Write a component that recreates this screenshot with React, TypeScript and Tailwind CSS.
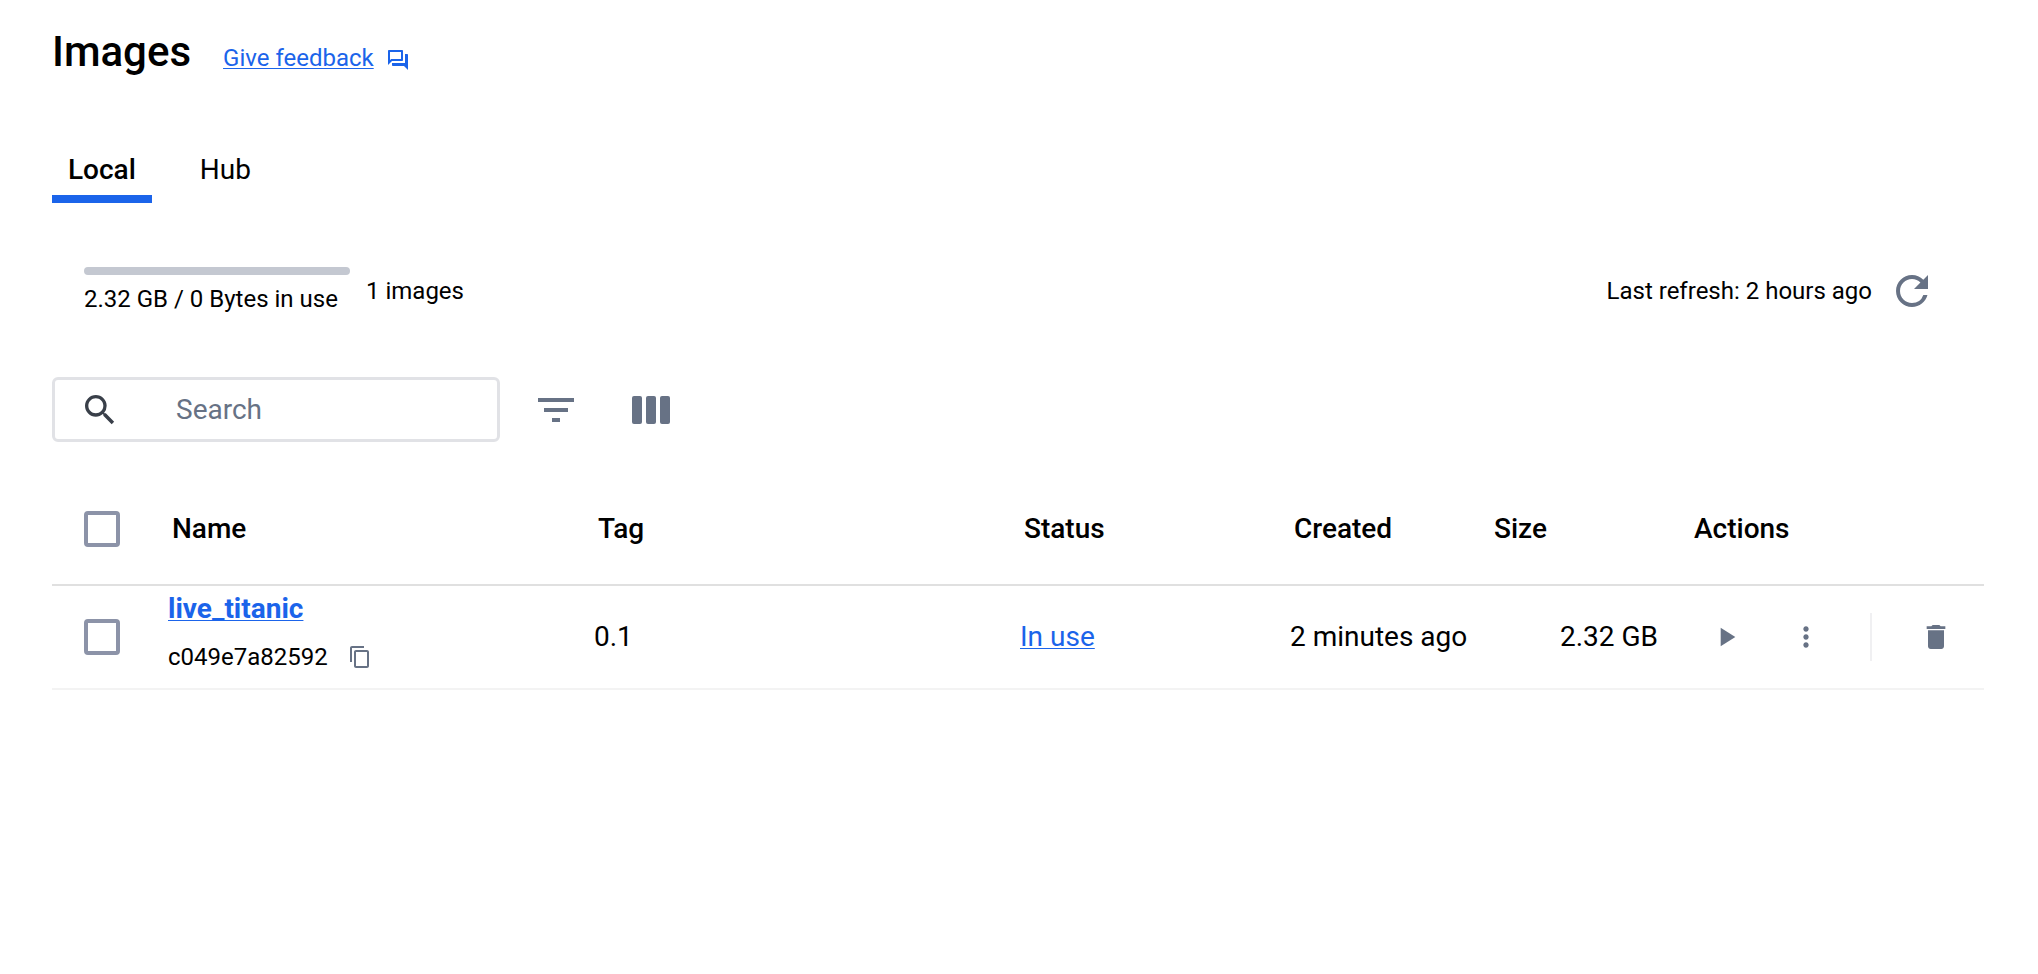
import { useState } from "react";
import {
  MdContentCopy,
  MdDelete,
  MdFilterList,
  MdMoreVert,
  MdOutlineQuestionAnswer,
  MdPlayArrow,
  MdRefresh,
  MdSearch,
} from "react-icons/md";

const images = [
  {
    name: "live_titanic",
    id: "c049e7a82592",
    tag: "0.1",
    status: "In use",
    created: "2 minutes ago",
    size: "2.32 GB",
  },
];

const columns = ["Name", "Tag", "Status", "Created", "Size", "Actions"];

function ColumnsIcon() {
  return (
    <svg width="38" height="28" viewBox="0 0 38 28" fill="currentColor" aria-hidden="true">
      <rect x="0" y="0" width="10" height="28" rx="2" />
      <rect x="14" y="0" width="10" height="28" rx="2" />
      <rect x="28" y="0" width="10" height="28" rx="2" />
    </svg>
  );
}

function Checkbox({ label }: { label: string }) {
  return (
    <input
      type="checkbox"
      aria-label={label}
      className="block size-9 appearance-none rounded border-4 border-[#8c93a8] bg-white checked:bg-[#1b64ea]"
    />
  );
}

export default function App() {
  const [tab, setTab] = useState("Local");

  return (
    <main className="min-h-screen bg-white pt-6 pr-[54px] pl-[52px] font-[Roboto,sans-serif] text-black">
      <header className="flex items-baseline gap-8">
        <h1 className="text-[42px] leading-14 font-medium">Images</h1>
        <a href="#feedback" className="flex items-center gap-3 text-2xl text-[#1b64ea]">
          <span className="underline decoration-1 underline-offset-2">Give feedback</span>
          <MdOutlineQuestionAnswer className="mt-1 size-6" />
        </a>
      </header>

      <nav role="tablist" className="mt-16 flex gap-8">
        {["Local", "Hub"].map((name) => (
          <button
            key={name}
            type="button"
            role="tab"
            aria-selected={tab === name}
            onClick={() => setTab(name)}
            className={
              tab === name
                ? "h-[59px] border-b-8 border-[#1b64ea] px-4 text-[28px] leading-[52px] font-medium"
                : "h-[59px] border-b-8 border-transparent px-4 text-[28px] leading-[52px]"
            }
          >
            {name}
          </button>
        ))}
      </nav>

      <section className="mt-16 flex items-center gap-4 pr-12 pl-8 text-2xl leading-8">
        <div className="w-[266px]">
          <div className="h-2 rounded-full bg-[#c4c8d1]" />
          <p className="mt-2 whitespace-nowrap">2.32 GB / 0 Bytes in use</p>
        </div>
        <p>1 images</p>
        <p className="ml-auto">Last refresh: 2 hours ago</p>
        <button type="button" aria-label="Refresh" className="text-[#677285]">
          <MdRefresh className="size-12" />
        </button>
      </section>

      <section className="mt-[62px] flex items-center gap-8 text-[#677285]">
        <label className="flex h-[65px] w-[448px] items-center rounded-md border-3 border-[#e1e2e6] pl-[25px]">
          <MdSearch className="size-10 shrink-0 text-[#393f49]" />
          <input
            type="text"
            aria-label="Search"
            placeholder="Search"
            className="ml-14 w-full min-w-0 text-[28px] outline-none placeholder:text-[#677285]"
          />
        </label>
        <button type="button" aria-label="Filter">
          <MdFilterList className="size-12" />
        </button>
        <button type="button" aria-label="Columns" className="ml-5">
          <ColumnsIcon />
        </button>
      </section>

      <table className="mt-8 w-full table-fixed text-left text-[28px]">
        <colgroup>
          <col className="w-[100px]" />
          <col />
          <col />
          <col className="w-[270px]" />
          <col className="w-[200px]" />
          <col className="w-[200px]" />
          <col className="w-[310px]" />
        </colgroup>
        <thead>
          <tr className="h-[111px] border-b-2 border-[#e0e0e0]">
            <th className="pl-8">
              <Checkbox label="Select all images" />
            </th>
            {columns.map((column) => (
              <th key={column} className="pl-5 font-medium">
                {column}
              </th>
            ))}
          </tr>
        </thead>
        <tbody>
          {images.map((image) => (
            <tr key={image.id} className="h-[104px] border-b-2 border-[#f3f3f3]">
              <td className="pl-8">
                <Checkbox label={`Select ${image.name}`} />
              </td>
              <td className="pb-2 pl-4">
                <a
                  href="#live_titanic"
                  className="block leading-10 font-bold text-[#1b64ea] underline decoration-1 underline-offset-2"
                >
                  {image.name}
                </a>
                <div className="mt-2 flex items-center gap-5 text-2xl leading-10">
                  {image.id}
                  <button type="button" aria-label="Copy image ID" className="text-[#677285]">
                    <MdContentCopy className="size-6" />
                  </button>
                </div>
              </td>
              <td className="pl-4">{image.tag}</td>
              <td className="pl-4">
                <a
                  href="#containers"
                  className="text-[#1b64ea] underline decoration-1 underline-offset-2"
                >
                  {image.status}
                </a>
              </td>
              <td className="pl-4 whitespace-nowrap">{image.created}</td>
              <td className="pr-4 text-right">{image.size}</td>
              <td>
                <div className="flex items-center gap-12 pl-9 text-[#677285]">
                  <button type="button" aria-label="Run">
                    <MdPlayArrow className="size-8" />
                  </button>
                  <button type="button" aria-label="More actions">
                    <MdMoreVert className="size-8" />
                  </button>
                  <span className="h-12 w-0.5 bg-[#f0f0f2]" />
                  <button type="button" aria-label="Delete">
                    <MdDelete className="size-8" />
                  </button>
                </div>
              </td>
            </tr>
          ))}
        </tbody>
      </table>
    </main>
  );
}
